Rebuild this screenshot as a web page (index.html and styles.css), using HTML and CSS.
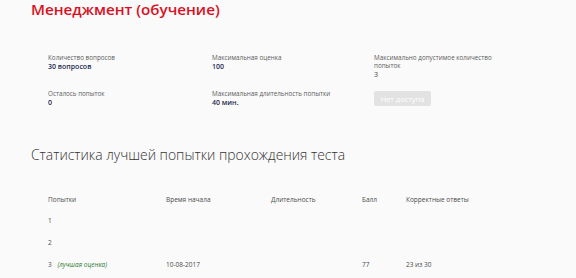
FILE: index.html
```html
<!DOCTYPE html>
<html lang="ru">
<head>
    <meta charset="UTF-8">
    <title>Менеджмент (обучение)</title>
    <link rel="stylesheet" href="styles.css">
</head>
<body>
    <h1 class="title">Менеджмент (обучение)</h1>

    <!-- Информация о тесте -->
    <div class="info">
        <div class="info-item">
            <div class="label">Количество вопросов</div>
            <div class="value">30 вопросов</div>
        </div>
        <div class="info-item">
            <div class="label">Максимальная оценка</div>
            <div class="value">100</div>
        </div>
        <div class="info-item">
            <div class="label">Максимально допустимое количество попыток</div>
            <div class="value plain">3</div>
        </div>
        <div class="info-item">
            <div class="label">Осталось попыток</div>
            <div class="value">0</div>
        </div>
        <div class="info-item">
            <div class="label">Максимальная длительность попытки</div>
            <div class="value">40 мин.</div>
        </div>
        <div class="info-item">
            <button class="btn" disabled>Нет доступа</button>
        </div>
    </div>

    <h2 class="subtitle">Статистика лучшей попытки прохождения теста</h2>

    <table class="stats">
        <tr>
            <th>Попытки</th>
            <th>Время начала</th>
            <th>Длительность</th>
            <th>Балл</th>
            <th>Корректные ответы</th>
        </tr>
        <tr>
            <td>1</td><td></td><td></td><td></td><td></td>
        </tr>
        <tr>
            <td>2</td><td></td><td></td><td></td><td></td>
        </tr>
        <tr>
            <td>3 <span class="best">(лучшая оценка)</span></td>
            <td>10-08-2017</td>
            <td></td>
            <td>77</td>
            <td>23 из 30</td>
        </tr>
    </table>
</body>
</html>
```

FILE: styles.css
```css
body {
    margin: 0;
    padding: 0 0 0 31px;
    background: #fafafa;
    font-family: "Open Sans", Arial, sans-serif;
    color: #333;
}
.title {
    margin: 0;
    font-size: 15.2px;
    font-weight: 600;
    line-height: 18px;
    color: #d9101f;
}
.info {
    display: grid;
    grid-template-columns: 164px 162px 120px;
    row-gap: 11px;
    margin: 36px 0 0 17px;
}
.label {
    font-size: 6.3px;
    line-height: 8px;
    color: #5a5a5a;
}
.value {
    font-size: 7px;
    line-height: 9px;
    font-weight: 600;
    color: #1d2b4f;
}
.value.plain {
    font-weight: 400;
    color: #444;
}
.btn {
    display: block;
    margin-top: 1px;
    width: 57px;
    height: 15px;
    padding: 0;
    border: none;
    border-radius: 2px;
    background: #e2e2e2;
    color: #fff;
    font-family: inherit;
    font-size: 7.5px;
}
.subtitle {
    margin: 38px 0 0;
    font-size: 13.9px;
    font-weight: 300;
    line-height: 20px;
    color: #333;
}
.stats {
    margin: 25px 0 0 17px;
    border-collapse: collapse;
    font-size: 6.5px;
    color: #4a4a4a;
}
.stats th {
    font-weight: 400;
    text-align: left;
    height: 19px;
    padding: 0;
}
.stats td {
    height: 22px;
    padding: 0;
}
.stats th:nth-child(1) { width: 118px; }
.stats th:nth-child(2) { width: 105px; }
.stats th:nth-child(3) { width: 91px; }
.stats th:nth-child(4) { width: 44px; }
.stats th:nth-child(5) { width: 80px; }
.best {
    margin-left: 4px;
    font-style: italic;
    color: #2f7a2f;
}
```
